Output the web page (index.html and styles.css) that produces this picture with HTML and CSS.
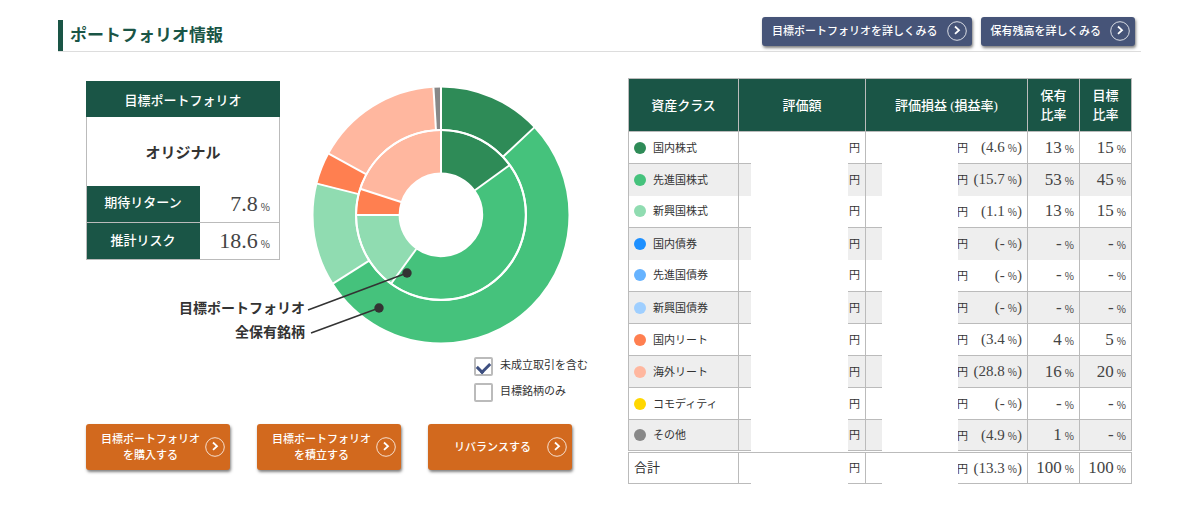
FILE: index.html
```html
<!DOCTYPE html>
<html lang="ja">
<head>
    <meta charset="UTF-8">
    <meta name="viewport" content="width=device-width, initial-scale=1.0">
    <title>ポートフォリオ情報</title>
    <link rel="stylesheet" href="styles.css">
</head>
<body>

<header class="page-header">
    <h1>ポートフォリオ情報</h1>
    <div class="header-actions">
        <button type="button" class="btn btn-detail">
            <span>目標ポートフォリオを詳しくみる</span>
            <svg class="arrow" viewBox="0 0 20 20"><circle cx="10" cy="10" r="9.3"/><path d="M8 5.5l4 3.7-4 3.7"/></svg>
        </button>
        <button type="button" class="btn btn-detail">
            <span>保有残高を詳しくみる</span>
            <svg class="arrow" viewBox="0 0 20 20"><circle cx="10" cy="10" r="9.3"/><path d="M8 5.5l4 3.7-4 3.7"/></svg>
        </button>
    </div>
</header>

<main class="content">
    <section class="overview">
        <div class="overview-top">
            <table class="summary">
                <tr><th colspan="2" class="summary-title">目標ポートフォリオ</th></tr>
                <tr><td colspan="2" class="summary-name">オリジナル</td></tr>
                <tr class="summary-return"><th class="summary-label">期待リターン</th><td class="summary-value">7.8<small>%</small></td></tr>
                <tr><th class="summary-label">推計リスク</th><td class="summary-value">18.6<small>%</small></td></tr>
            </table>

            <svg class="chart" viewBox="0 0 256 256">
                <!-- outer ring: all holdings -->
                <g class="ring" transform="rotate(-90 128 128)">
                    <circle cx="128" cy="128" r="106.7" pathLength="100" stroke="#2e8b57" stroke-dasharray="13 87"/>
                    <circle cx="128" cy="128" r="106.7" pathLength="100" stroke="#45c27c" stroke-dasharray="53 47" stroke-dashoffset="-13"/>
                    <circle cx="128" cy="128" r="106.7" pathLength="100" stroke="#90dcb1" stroke-dasharray="13 87" stroke-dashoffset="-66"/>
                    <circle cx="128" cy="128" r="106.7" pathLength="100" stroke="#ff7f50" stroke-dasharray="4 96" stroke-dashoffset="-79"/>
                    <circle cx="128" cy="128" r="106.7" pathLength="100" stroke="#ffb79f" stroke-dasharray="16 84" stroke-dashoffset="-83"/>
                    <circle cx="128" cy="128" r="106.7" pathLength="100" stroke="#888" stroke-dasharray="1 99" stroke-dashoffset="-99"/>
                </g>
                <!-- inner ring: target portfolio -->
                <g class="ring">
                    <path d="M128 64.8A63.2 63.2 0 0 1 179.1 90.9" stroke="#2e8b57"/>
                    <path d="M179.1 90.9A63.2 63.2 0 0 1 90.9 179.1" stroke="#45c27c"/>
                    <path d="M90.9 179.1A63.2 63.2 0 0 1 64.8 128" stroke="#90dcb1"/>
                    <path d="M64.8 128A63.2 63.2 0 0 1 67.9 108.5" stroke="#ff7f50"/>
                    <path d="M67.9 108.5A63.2 63.2 0 0 1 128 64.8" stroke="#ffb79f"/>
                </g>
                <g class="divider">
                    <circle cx="128" cy="128" r="85"/>
                    <path d="M128 86V0"/>
                    <path d="M128 43V0" transform="rotate(46.8 128 128)"/>
                    <path d="M128 43V0" transform="rotate(237.6 128 128)"/>
                    <path d="M128 43V0" transform="rotate(284.2 128 128)"/>
                    <path d="M128 43V0" transform="rotate(298.6 128 128)"/>
                    <path d="M128 43V0" transform="rotate(356.6 128 128)"/>
                    <path d="M128 86V43" transform="rotate(54 128 128)"/>
                    <path d="M128 86V43" transform="rotate(216 128 128)"/>
                    <path d="M128 86V43" transform="rotate(270 128 128)"/>
                    <path d="M128 86V43" transform="rotate(288 128 128)"/>
                </g>
                <g class="leader">
                    <path d="M-5 223L94 186"/>
                    <circle cx="94" cy="186" r="4.7"/>
                    <path d="M-2 246L66 221"/>
                    <circle cx="66" cy="221" r="4.7"/>
                    <text x="-8" y="226">目標ポートフォリオ</text>
                    <text x="-8" y="250">全保有銘柄</text>
                </g>
            </svg>
        </div>

        <div class="options">
            <label><input type="checkbox" checked>未成立取引を含む</label>
            <label><input type="checkbox">目標銘柄のみ</label>
        </div>

        <div class="actions">
            <button type="button" class="btn btn-action">
                <span>目標ポートフォリオ<br>を購入する</span>
                <svg class="arrow" viewBox="0 0 20 20"><circle cx="10" cy="10" r="9.3"/><path d="M8 5.5l4 3.7-4 3.7"/></svg>
            </button>
            <button type="button" class="btn btn-action">
                <span>目標ポートフォリオ<br>を積立する</span>
                <svg class="arrow" viewBox="0 0 20 20"><circle cx="10" cy="10" r="9.3"/><path d="M8 5.5l4 3.7-4 3.7"/></svg>
            </button>
            <button type="button" class="btn btn-action">
                <span>リバランスする</span>
                <svg class="arrow" viewBox="0 0 20 20"><circle cx="10" cy="10" r="9.3"/><path d="M8 5.5l4 3.7-4 3.7"/></svg>
            </button>
        </div>
    </section>

    <table class="assets">
        <colgroup>
            <col class="col-class"><col class="col-amount"><col><col class="col-ratio"><col class="col-ratio">
        </colgroup>
        <thead>
            <tr><th>資産クラス</th><th>評価額</th><th>評価損益 (損益率)</th><th>保有<br>比率</th><th>目標<br>比率</th></tr>
        </thead>
        <tbody>
            <tr>
                <td class="name"><i class="dot jp-stock"></i>国内株式</td>
                <td class="amount">円</td>
                <td class="profit">円<span>(4.6<small>%</small>)</span></td>
                <td class="ratio">13<small>%</small></td>
                <td class="ratio">15<small>%</small></td>
            </tr>
            <tr class="no-line">
                <td class="name"><i class="dot dev-stock"></i>先進国株式</td>
                <td class="amount">円</td>
                <td class="profit">円<span>(15.7<small>%</small>)</span></td>
                <td class="ratio">53<small>%</small></td>
                <td class="ratio">45<small>%</small></td>
            </tr>
            <tr>
                <td class="name"><i class="dot em-stock"></i>新興国株式</td>
                <td class="amount">円</td>
                <td class="profit">円<span>(1.1<small>%</small>)</span></td>
                <td class="ratio">13<small>%</small></td>
                <td class="ratio">15<small>%</small></td>
            </tr>
            <tr class="no-line">
                <td class="name"><i class="dot jp-bond"></i>国内債券</td>
                <td class="amount">円</td>
                <td class="profit">円<span>(-<small>%</small>)</span></td>
                <td class="ratio">-<small>%</small></td>
                <td class="ratio">-<small>%</small></td>
            </tr>
            <tr>
                <td class="name"><i class="dot dev-bond"></i>先進国債券</td>
                <td class="amount">円</td>
                <td class="profit">円<span>(-<small>%</small>)</span></td>
                <td class="ratio">-<small>%</small></td>
                <td class="ratio">-<small>%</small></td>
            </tr>
            <tr>
                <td class="name"><i class="dot em-bond"></i>新興国債券</td>
                <td class="amount">円</td>
                <td class="profit">円<span>(-<small>%</small>)</span></td>
                <td class="ratio">-<small>%</small></td>
                <td class="ratio">-<small>%</small></td>
            </tr>
            <tr>
                <td class="name"><i class="dot jp-reit"></i>国内リート</td>
                <td class="amount">円</td>
                <td class="profit">円<span>(3.4<small>%</small>)</span></td>
                <td class="ratio">4<small>%</small></td>
                <td class="ratio">5<small>%</small></td>
            </tr>
            <tr>
                <td class="name"><i class="dot world-reit"></i>海外リート</td>
                <td class="amount">円</td>
                <td class="profit">円<span>(28.8<small>%</small>)</span></td>
                <td class="ratio">16<small>%</small></td>
                <td class="ratio">20<small>%</small></td>
            </tr>
            <tr>
                <td class="name"><i class="dot commodity"></i>コモディティ</td>
                <td class="amount">円</td>
                <td class="profit">円<span>(-<small>%</small>)</span></td>
                <td class="ratio">-<small>%</small></td>
                <td class="ratio">-<small>%</small></td>
            </tr>
            <tr>
                <td class="name"><i class="dot other"></i>その他</td>
                <td class="amount">円</td>
                <td class="profit">円<span>(4.9<small>%</small>)</span></td>
                <td class="ratio">1<small>%</small></td>
                <td class="ratio">-<small>%</small></td>
            </tr>
        </tbody>
        <tfoot>
            <tr>
                <td class="total">合計</td>
                <td class="amount">円</td>
                <td class="profit">円<span>(13.3<small>%</small>)</span></td>
                <td class="ratio">100<small>%</small></td>
                <td class="ratio">100<small>%</small></td>
            </tr>
        </tfoot>
    </table>
</main>

</body>
</html>
```
FILE: styles.css
```css
* {
    box-sizing: border-box;
}

body {
    margin: 0;
    padding: 17px 59px 20px 58px;
    background-color: #fff;
    color: #333;
    font-family: "Liberation Serif", "Noto Sans CJK JP", serif;
    font-size: 13px;
}

.page-header {
    display: flex;
    justify-content: space-between;
    align-items: flex-end;
    border-bottom: 1px solid #ddd;
}

h1 {
    margin: 0;
    padding-left: 7px;
    border-left: 5px solid #1a5546;
    color: #1a5546;
    font-size: 17px;
    line-height: 31px;
}

.header-actions {
    display: flex;
    gap: 9px;
    padding: 0 6px 5px 0;
}

.btn {
    display: flex;
    align-items: center;
    border: none;
    border-radius: 3px;
    box-shadow: 1px 2px 3px rgba(0, 0, 0, 0.5);
    color: #fff;
    font-family: inherit;
    font-size: 11px;
    font-weight: 500;
    line-height: 16px;
    cursor: pointer;
}

.btn-detail {
    gap: 9px;
    height: 29px;
    padding: 0 5px 2px 10px;
    background-color: #465478;
}

.btn-action {
    width: 144px;
    height: 46px;
    padding: 0 5px 0 10px;
    background-color: #d2691e;
}

.btn-action span {
    flex: 1;
    white-space: nowrap;
}

.arrow {
    flex: none;
    width: 20px;
    height: 20px;
    fill: none;
    stroke: #fff;
}

.arrow circle {
    stroke-width: 0.8;
}

.arrow path {
    stroke-width: 1.8;
}

.content {
    display: grid;
    grid-template-columns: 542fr 504fr;
    align-items: start;
    margin-top: 26px;
    padding: 0 9px 0 28px;
}

.overview {
    padding-top: 3px;
}

.overview-top {
    display: flex;
    align-items: flex-start;
    gap: 33px;
}

table {
    border-collapse: collapse;
}

th {
    background-color: #1a5546;
    color: #fff;
    font-weight: 500;
}

.summary {
    width: 194px;
}

.summary th,
.summary td {
    border: 1px solid #bbb;
    padding: 0;
    text-align: center;
}

.summary .summary-title {
    height: 35px;
    border-color: #1a5546;
}

.summary .summary-name {
    height: 69px;
    border-bottom: none;
    font-size: 15px;
    font-weight: bold;
}

.summary .summary-label {
    width: 113px;
    height: 37px;
    padding-bottom: 4px;
    border-right-color: #1a5546;
}

.summary .summary-value {
    padding-right: 9px;
    font-size: 22px;
    text-align: right;
}

.summary .summary-return th,
.summary .summary-return td {
    border-top: none;
}

small {
    margin-left: 3px;
    font-family: "Noto Sans CJK JP", sans-serif;
    font-size: 10px;
    line-height: 10px;
}

.chart {
    width: 256px;
    height: 256px;
    margin-top: 6px;
    overflow: visible;
}

.ring circle,
.ring path {
    fill: none;
    stroke-width: 41.6;
}

.divider path,
.divider circle {
    fill: none;
    stroke: #fff;
    stroke-width: 2;
}

.leader path {
    stroke: #333;
    stroke-width: 1.5;
}

.leader circle,
.leader text {
    fill: #333;
}

.leader text {
    font-size: 14px;
    font-weight: bold;
    text-anchor: end;
}

.options {
    display: flex;
    flex-direction: column;
    gap: 7px;
    margin: 14px 0 0 388px;
    font-size: 11px;
}

.options label {
    display: flex;
    align-items: flex-start;
    gap: 7px;
    height: 19px;
    line-height: 16px;
}

.options input {
    appearance: none;
    width: 19px;
    height: 19px;
    margin: 0;
    border: 2px solid #bbb;
    border-radius: 2px;
}

.options input:checked::before {
    content: "";
    display: block;
    width: 6px;
    height: 10px;
    margin: 1px auto 0;
    border: solid #3d4f80;
    border-width: 0 3px 3px 0;
    transform: rotate(45deg);
}

.actions {
    display: flex;
    gap: 27px;
    margin-top: 22px;
}

.assets {
    width: 100%;
    table-layout: fixed;
}

.col-class {
    width: 110px;
}

.col-amount {
    width: 127px;
}

.col-ratio {
    width: 52px;
}

.assets th,
.assets td {
    position: relative;
    border: 1px solid #bbb;
    padding: 0 5px;
}

.assets th {
    height: 53px;
    border-bottom: none;
    line-height: 19px;
}

.assets td {
    height: 32px;
    line-height: 20px;
}

.assets tbody tr:nth-child(even) {
    background-color: #eee;
}

.assets .no-line td {
    border-bottom: none;
}

.assets .no-line + tr td {
    border-top: none;
}

.assets tbody tr:last-child td {
    border-bottom: 3px double #bbb;
}

.name,
.amount,
.profit {
    font-size: 11px;
}

.dot {
    display: inline-block;
    width: 12px;
    height: 12px;
    margin-right: 7px;
    border-radius: 50%;
    vertical-align: -2px;
}

.jp-stock { background-color: #2e8b57; }
.dev-stock { background-color: #45c27c; }
.em-stock { background-color: #90dcb1; }
.jp-bond { background-color: #1e90ff; }
.dev-bond { background-color: #66b3ff; }
.em-bond { background-color: #9fcfff; }
.jp-reit { background-color: #ff7f50; }
.world-reit { background-color: #ffb79f; }
.commodity { background-color: #ffd700; }
.other { background-color: #888; }

.amount,
.profit,
.ratio {
    text-align: right;
}

.profit span {
    display: inline-block;
    width: 54px;
    font-size: 15px;
}

.ratio {
    font-size: 17px;
}

.profit span,
.ratio,
.summary-value {
    color: #444;
}

/* hides the money amounts */
.amount::after,
.profit::after {
    content: "";
    position: absolute;
    top: 0;
    bottom: -2px;
    left: 12px;
    right: 17px;
    background-color: #fff;
}

.profit::after {
    left: 16px;
    right: 69px;
}
```
